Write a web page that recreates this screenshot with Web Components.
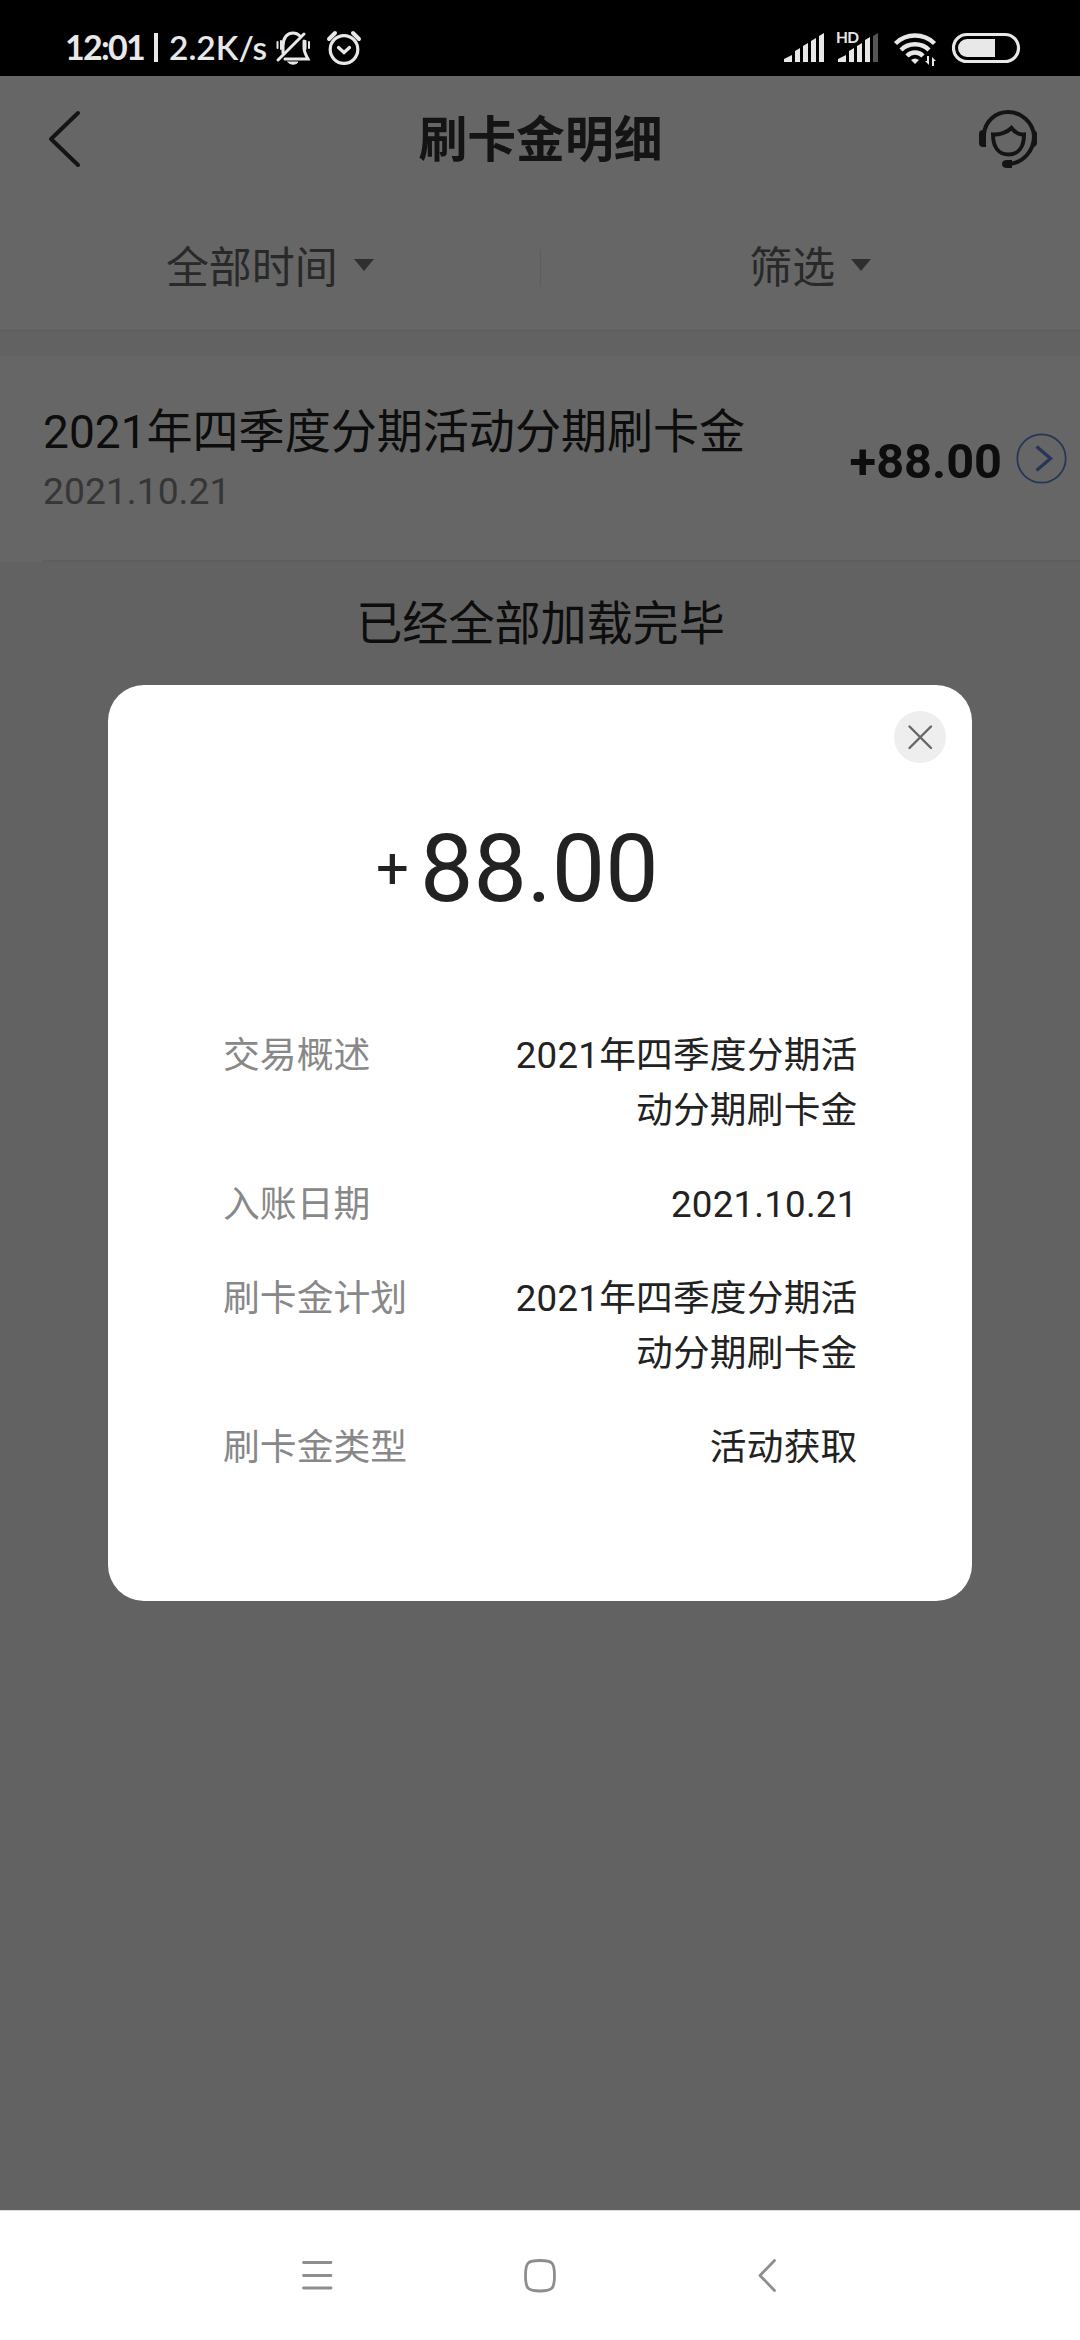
<!DOCTYPE html>
<html lang="zh-CN">
<head>
<meta charset="utf-8">
<title>刷卡金明细</title>
<style>
html,body{margin:0;padding:0}
body{width:1080px;height:2340px;overflow:hidden;background:#f5f5f5;font-family:Roboto,"Noto Sans CJK SC",sans-serif}
</style>
</head>
<body>
<phone-screen></phone-screen>
<script>
function define(name, html) {
  const tpl = document.createElement('template');
  tpl.innerHTML = '<style>*{box-sizing:border-box}:host{box-sizing:border-box}svg{display:block;flex:none}</style>' + html;
  customElements.define(name, class extends HTMLElement {
    constructor() {
      super();
      this.attachShadow({ mode: 'open' }).appendChild(tpl.content.cloneNode(true));
    }
  });
}

define('status-bar', `
<style>
:host{display:flex;height:76px;background:#000;color:#e8e8e8;align-items:flex-start;font-family:Lato,sans-serif;padding-left:65px}
span{white-space:nowrap;line-height:40px;margin-top:27px;flex:none}
.time{font-size:34px;font-weight:700;width:79px;letter-spacing:-1.700px}
.bar{width:4px;height:29px;background:#e8e8e8;margin:33px 0 0 10px}
.rate{font-size:33.500px;font-weight:600;width:102px;margin-left:11px;letter-spacing:0}
</style>
<span class="time">12:01</span><i class="bar"></i><span class="rate">2.2K/s</span>
<svg style="margin-left:3px" width="96" height="76" viewBox="274 0 96 76" fill="none" stroke="#e8e8e8" stroke-width="3" stroke-linecap="round">
  <path d="M283 53V46c0-8 4-13 10-13 3 0 5 1 7 3M304 41v7c0 4 2 7 4 11H285"/>
  <path d="M278 60L304 34"/><path d="M288 62h10c-2 3-8 3-10 0z" fill="#e8e8e8" stroke-width="1"/>
  <path d="M277.500 42v6M281 41v8M305.500 41v8M309 42v6" stroke-width="2"/>
  <circle cx="344" cy="49.500" r="13.800" stroke-width="3.200"/>
  <path d="M329 39l6-6M353 33l6 6" stroke-width="4"/><path d="M338.500 47.500l5.500 5 5.500-5" stroke-width="3.200"/>
</svg>
<svg style="margin-left:404px" width="306" height="76" viewBox="774 0 306 76" fill="#e8e8e8">
  <path d="M784 59l8-4v7h-8zM795 51l5-3v14h-5zM803 46l5-3v19h-5zM811 41l5-3v24h-5z"/>
  <path d="M819 36l5-3v29h-5z"/>
  <path d="M838 59l8-4v7h-8zM849 51l5-3v14h-5zM857 46l5-3v19h-5zM865 40l5-3v25h-5z"/>
  <path d="M873 36l5-3v29h-5z" fill="#555"/>
  <text x="836" y="43" font-family="Lato" font-weight="700" font-size="15.500" textLength="23">HD</text>
  <g fill="none" stroke="#e8e8e8" stroke-width="4.500"><path d="M895.500 43.500a28 28 0 0 1 39 0M901 50a20 20 0 0 1 28 0M907 56a11 11 0 0 1 16 0"/></g>
  <path d="M911 60q4-3 8 0l-4 4z"/>
  <path d="M929 56v9l-4-4h2v-5zM932 66v-9l4 4h-2v5z"/>
  <rect x="953.500" y="34.500" width="65" height="27" rx="13.500" fill="none" stroke="#e8e8e8" stroke-width="3.200"/>
  <path d="M995 39v18H967a9 9 0 0 1 0-18z"/>
</svg>`);

define('page-header', `
<style>
:host{display:flex;align-items:center;height:128px;padding:0 42px 0 48px;background:#fff}
h1{flex:1;margin:2px 0 0;text-align:center;font-size:48.800px;line-height:70px;font-weight:700;color:#333;padding-left:22px}
svg{margin-top:-2px}
</style>
<svg width="33" height="58" viewBox="0 0 33 58" fill="none" stroke="#333" stroke-width="4" stroke-linecap="round" stroke-linejoin="round"><path d="M30 3L3 29l27 26"/></svg>
<h1><slot></slot></h1>
<svg width="60" height="60" viewBox="978 109 60 60" fill="none" stroke="#333" stroke-width="4">
  <path d="M984 134c1-12 11-22 24-22s25 10 26 24c0 15-11 27-25 28"/>
  <path d="M979 134q0-4 4-4h3v17h-3q-4 0-4-4zM1032 130h2q3 1 3 4v9q0 4-5 4zM1002 164q0-4 5-4h5v8h-5q-5 0-5-4z" fill="#333" stroke="none"/>
  <path d="M993 134.500c6 .5 14-2 18.500-6.500 3 4 8 7 12.500 6.500 0 13-6 20-15.500 20s-15.500-7-15.500-20z"/>
</svg>`);

define('filter-item', `
<style>
:host{display:flex;flex:1;align-items:center;justify-content:center;gap:16px;font-size:42.900px;line-height:60px;color:#666}
i{width:0;height:0;border:10.500px solid transparent;border-top:12.500px solid #777;border-bottom:0;margin-top:-7px}
</style><span><slot></slot></span><i></i>`);

define('filter-bar', `
<style>
:host{display:flex;align-items:center;height:127px;background:#fff;border-bottom:1px solid #ececec;padding-top:2px}
i{width:1px;height:36px;background:#e8e8e8}
</style><slot name="a"></slot><i></i><slot name="b"></slot>`);

define('record-item', `
<style>
:host{display:flex;align-items:flex-start;justify-content:space-between;height:206px;background:linear-gradient(#ececec,#ececec) 43px 204px/1037px 2px no-repeat,#fff;margin-top:25px;padding:42px 13px 0 43px}
.t{font-size:46.050px;line-height:69px;color:#222;white-space:nowrap}
.d{font-size:37.300px;line-height:48px;color:#888}
.r{display:flex;align-items:flex-start;font-weight:700;font-size:48.700px;line-height:56px;color:#222;gap:14px;margin-top:36px}
svg{margin-top:-1px}
</style>
<div><div class="t"><slot name="title"></slot></div><div class="d"><slot name="date"></slot></div></div>
<div class="r"><slot name="amount"></slot>
<svg width="51" height="51" viewBox="0 0 51 51" fill="none" stroke="#5f88d8"><circle cx="25.500" cy="25.500" r="24.200" stroke-width="1.800"/><path d="M20.500 13.500l14 12-14 12" stroke-width="3.400"/></svg></div>`);

define('detail-row', `
<style>
:host{display:flex;justify-content:space-between;font-size:36.850px;line-height:55.200px;color:#222}
.l{color:#888;white-space:nowrap}.v{width:346px;text-align:right;font-size:36.700px;letter-spacing:.22px}
</style><span class="l"><slot name="label"></slot></span><span class="v"><slot></slot></span>`);

define('detail-dialog', `
<style>
:host{display:flex;flex-direction:column;width:864px;height:916px;border-radius:36px;background:#fff;padding:26px 26px 0}
.x{align-self:flex-end;width:52px;height:52px}
.amt{display:flex;margin:58px 0 0 242px;height:96px;color:#222;line-height:96px;font-size:95px}
.p{font-size:58px;width:44px;margin-top:-1px}
.list{display:flex;flex-direction:column;gap:38.500px;margin:111px 88.500px 0 89px}
</style>
<svg class="x" viewBox="0 0 52 52"><circle cx="26" cy="26" r="26" fill="#eee"/><path d="M15.500 15.500l21.500 21.500M37 15.500L15.500 37" stroke="#666" stroke-width="2.400" stroke-linecap="round"/></svg>
<div class="amt"><span class="p">+</span><span><slot name="amount"></slot></span></div>
<div class="list"><slot></slot></div>`);

define('nav-bar', `
<style>
:host{display:flex;align-items:flex-start;justify-content:center;height:130px;background:#fff;border-top:1px solid #ddd;padding-top:48px}
</style>
<svg width="520" height="36" viewBox="280 2258 520 36" fill="none" stroke="#8e8e8e" stroke-width="2.800" stroke-linecap="round" stroke-linejoin="round">
<path d="M303.500 2267.500h27.500M303.500 2280.500h27.500M303.500 2293h27.500" transform="translate(0,-6)"/>
<path d="M540 2259.500c12 0 14.500 1.500 14.500 15s-2.500 15.500-14.500 15.500-14.500-2-14.500-15.500 2.500-15 14.500-15z"/>
<path d="M774.500 2259.500l-14.500 15 14.500 15"/></svg>`);

define('phone-screen', `
<style>
:host{display:flex;flex-direction:column;width:1080px;height:2340px;position:relative}
main{flex:1;background:#f5f5f5}
.end{margin-top:27px;text-align:center;font-size:46.050px;line-height:70px;color:#222;padding-left:1px}
.mask{position:absolute;left:0;right:0;top:76px;bottom:130px;background:rgba(0,0,0,.6);display:flex;align-items:flex-start;justify-content:center;padding-top:609px}
</style>
<status-bar></status-bar>
<main>
<page-header>刷卡金明细</page-header>
<filter-bar><filter-item slot="a">全部时间</filter-item><filter-item slot="b">筛选</filter-item></filter-bar>
<record-item><span slot="title">2021年四季度分期活动分期刷卡金</span><span slot="date">2021.10.21</span><span slot="amount">+88.00</span></record-item>
<div class="end">已经全部加载完毕</div>
</main>
<nav-bar></nav-bar>
<div class="mask"><detail-dialog><span slot="amount">88.00</span>
<detail-row><span slot="label">交易概述</span>2021年四季度分期活动分期刷卡金</detail-row>
<detail-row><span slot="label">入账日期</span>2021.10.21</detail-row>
<detail-row><span slot="label">刷卡金计划</span>2021年四季度分期活动分期刷卡金</detail-row>
<detail-row><span slot="label">刷卡金类型</span>活动获取</detail-row>
</detail-dialog></div>`);
</script>
</body>
</html>
